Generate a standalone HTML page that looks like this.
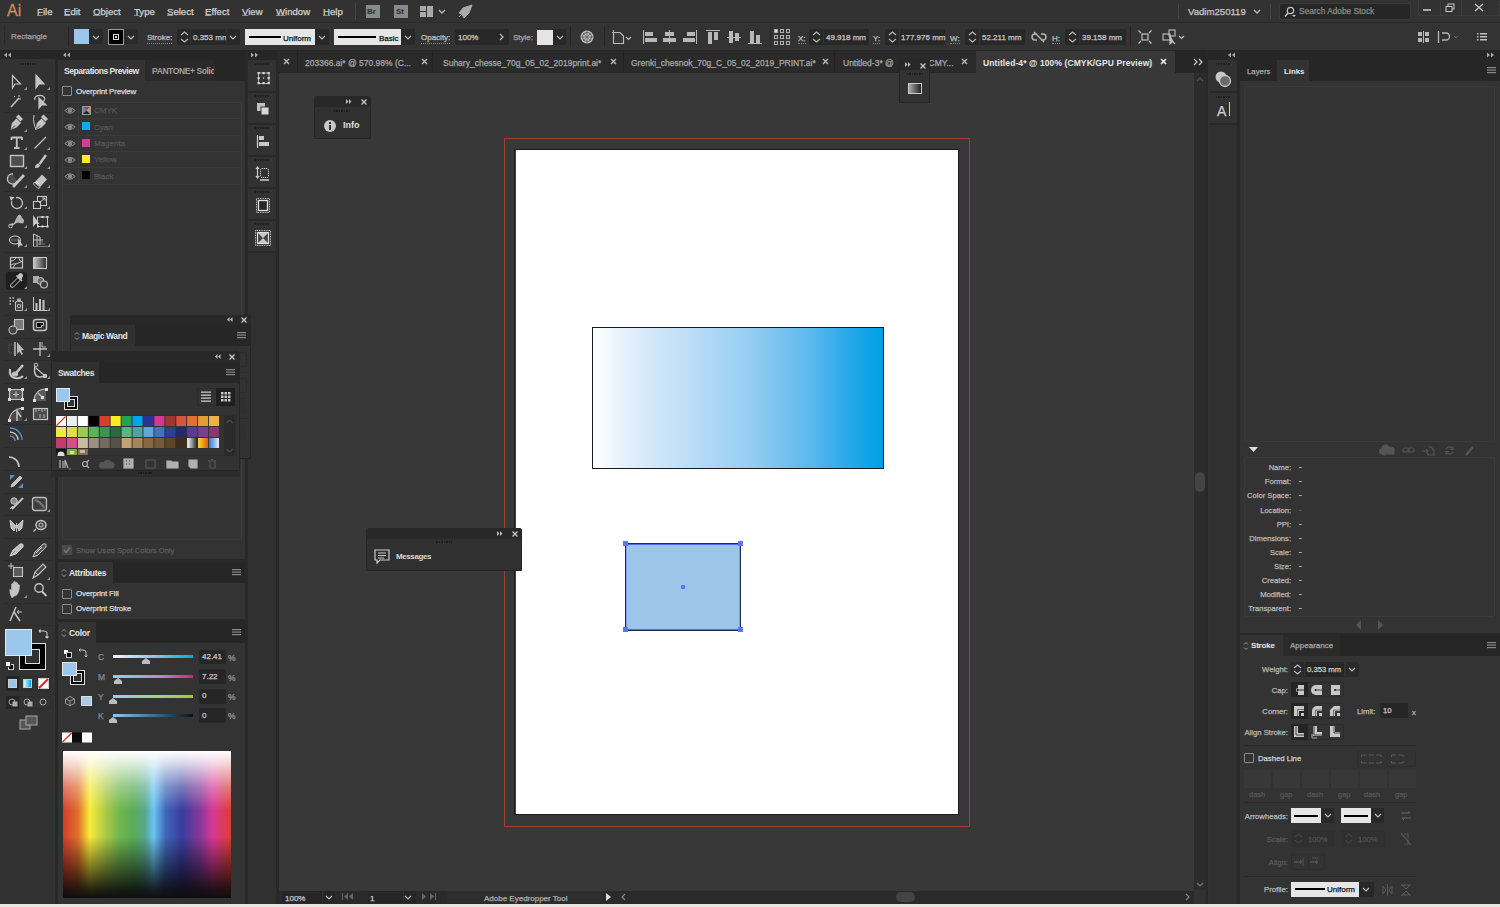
<!DOCTYPE html>
<html><head><meta charset="utf-8">
<style>
*{margin:0;padding:0;box-sizing:border-box}
html,body{width:1500px;height:907px;overflow:hidden;background:#323232;font-family:"Liberation Sans",sans-serif;color:#c8c8c8}
.a{position:absolute}
.t{position:absolute;white-space:nowrap;line-height:1;-webkit-text-stroke:0.25px currentColor}
svg{position:absolute;overflow:visible}
.t[style*="bold"]{-webkit-text-stroke:0}
#right .t{margin-top:1px}
#ctrl .t{margin-top:1px}
#tabs .t{margin-top:1px}
</style></head><body>
<!-- MENU BAR -->
<div class="a" style="left:0;top:0;width:1500px;height:22px;background:#323232"></div>
<div class="a" style="left:0;top:22px;width:1500px;height:1px;background:#2a2a2a"></div>
<!-- CONTROL BAR -->
<div class="a" style="left:0;top:23px;width:1500px;height:27px;background:#333333"></div>
<!-- MENU CONTENT -->
<div class="t" style="left:7px;top:3px;font-size:16px;color:#c98b5f;letter-spacing:0px;-webkit-text-stroke:0.3px #c98b5f">Ai</div>
<div id="menu" style="font-size:9.6px;color:#d2d2d2">
<div class="t" style="left:37px;top:7px"><span style="text-decoration:underline;text-decoration-color:#888;text-underline-offset:0px">F</span>ile</div>
<div class="t" style="left:64px;top:7px"><span style="text-decoration:underline;text-decoration-color:#888;text-underline-offset:0px">E</span>dit</div>
<div class="t" style="left:93px;top:7px"><span style="text-decoration:underline;text-decoration-color:#888;text-underline-offset:0px">O</span>bject</div>
<div class="t" style="left:134px;top:7px"><span style="text-decoration:underline;text-decoration-color:#888;text-underline-offset:0px">T</span>ype</div>
<div class="t" style="left:167px;top:7px"><span style="text-decoration:underline;text-decoration-color:#888;text-underline-offset:0px">S</span>elect</div>
<div class="t" style="left:205px;top:7px"><span style="text-decoration:underline;text-decoration-color:#888;text-underline-offset:0px">E</span>ffect</div>
<div class="t" style="left:242px;top:7px"><span style="text-decoration:underline;text-decoration-color:#888;text-underline-offset:0px">V</span>iew</div>
<div class="t" style="left:276px;top:7px"><span style="text-decoration:underline;text-decoration-color:#888;text-underline-offset:0px">W</span>indow</div>
<div class="t" style="left:323px;top:7px"><span style="text-decoration:underline;text-decoration-color:#888;text-underline-offset:0px">H</span>elp</div>
</div>
<div class="a" style="left:355px;top:3px;width:1px;height:17px;background:#454545"></div>
<div class="a" style="left:366px;top:5px;width:14px;height:13px;background:#8a8a8a"></div>
<div class="t" style="left:367px;top:8px;font-size:8px;font-weight:bold;color:#2c2c2c">Br</div>
<div class="a" style="left:394px;top:5px;width:14px;height:13px;background:#8a8a8a"></div>
<div class="t" style="left:396px;top:8px;font-size:8px;font-weight:bold;color:#2c2c2c">St</div>
<div class="a" style="left:420px;top:6px;width:6px;height:5px;background:#aaa"></div>
<div class="a" style="left:427px;top:6px;width:6px;height:11px;background:#aaa"></div>
<div class="a" style="left:420px;top:12px;width:6px;height:5px;background:#aaa"></div>
<svg style="left:438px;top:9px" width="8" height="5"><path d="M1 1 L4 4 L7 1" stroke="#bbb" stroke-width="1.3" fill="none"/></svg>
<svg style="left:457px;top:4px" width="16" height="15"><path d="M15 1 L6 4 L2 9 L5 10 L7 14 L12 9 Z M2 13 L5 10" fill="#aaa" stroke="#aaa" stroke-width="1"/></svg>
<div class="a" style="left:1178px;top:4px;width:1px;height:15px;background:#444"></div>
<div class="t" style="left:1188px;top:7px;font-size:9.6px;color:#c8c8c8">Vadim250119</div>
<svg style="left:1253px;top:9px" width="8" height="6"><path d="M1 1 L4 4 L7 1" stroke="#bbb" stroke-width="1.3" fill="none"/></svg>
<div class="a" style="left:1270px;top:4px;width:1px;height:15px;background:#444"></div>
<div class="a" style="left:1279px;top:3px;width:132px;height:17px;background:#262626;border:1px solid #3a3a3a;border-radius:2px"></div>
<svg style="left:1283px;top:6px" width="14" height="12"><circle cx="7.5" cy="4.5" r="3.2" stroke="#c8c8c8" stroke-width="1.2" fill="none"/><path d="M5 7 L2 10.5" stroke="#c8c8c8" stroke-width="1.5"/><path d="M9 9 L13 9 L11 11Z" fill="#c8c8c8"/></svg>
<div class="t" style="left:1299px;top:7px;font-size:8.3px;color:#8a8a8a">Search Adobe Stock</div>
<div class="a" style="left:1418px;top:1px;width:82px;height:15px;border:1px solid #3c3c3c;border-top:none"></div>
<div class="a" style="left:1440px;top:1px;width:1px;height:14px;background:#3c3c3c"></div>
<div class="a" style="left:1461px;top:1px;width:1px;height:14px;background:#3c3c3c"></div>
<div class="a" style="left:1423px;top:9px;width:8px;height:2px;background:#aaa"></div>
<svg style="left:1445px;top:3px" width="11" height="10"><rect x="3" y="1" width="6" height="5" stroke="#c8c8c8" fill="none"/><rect x="1" y="3.5" width="6" height="5" stroke="#c8c8c8" fill="#323232"/></svg>
<svg style="left:1474px;top:3px" width="10" height="10"><path d="M1 1 L9 8 M9 1 L1 8" stroke="#c8c8c8" stroke-width="1.3"/></svg>

<!-- CONTROL CONTENT -->
<div id="ctrl" style="font-size:8px;color:#c0c0c0">
<div class="a" style="left:4px;top:26px;width:2px;height:19px;border-left:1px dotted #222"></div>
<div class="t" style="left:11px;top:32px;color:#a4a4a4">Rectangle</div>
<div class="a" style="left:68px;top:26px;width:1px;height:21px;background:#262626"></div>
<div class="a" style="left:74px;top:29px;width:15px;height:15px;background:#9cc7ec"></div>
<div class="a" style="left:89px;top:29px;width:14px;height:15px;background:#2a2a2a;border-radius:0 2px 2px 0"></div>
<svg style="left:92px;top:35px" width="8" height="5"><path d="M1 1 L4 4 L7 1" stroke="#bbb" stroke-width="1.2" fill="none"/></svg>
<div class="a" style="left:108px;top:29px;width:16px;height:16px;background:#000;border:1px solid #9a9a9a"></div>
<div class="a" style="left:113px;top:34px;width:6px;height:6px;border:1px solid #ddd"></div>
<div class="a" style="left:115px;top:36px;width:2px;height:2px;background:#ddd"></div>
<div class="a" style="left:124px;top:29px;width:14px;height:15px;background:#2a2a2a"></div>
<svg style="left:127px;top:35px" width="8" height="5"><path d="M1 1 L4 4 L7 1" stroke="#bbb" stroke-width="1.2" fill="none"/></svg>
<div class="t" style="left:147px;top:33px;border-bottom:1px dotted #888;padding-bottom:1px">Stroke:</div>
<div class="a" style="left:177px;top:29px;width:63px;height:16px;background:#282828;border-radius:2px"></div>
<svg style="left:180px;top:30px" width="9" height="14"><path d="M1 5 L4.5 2 L8 5 M1 9 L4.5 12 L8 9" stroke="#bbb" stroke-width="1.1" fill="none"/></svg>
<div class="a" style="left:190px;top:29px;width:1px;height:16px;background:#333"></div>
<div class="t" style="left:193px;top:33px;color:#c8c8c8">0.353 mn</div>
<div class="a" style="left:226px;top:29px;width:1px;height:16px;background:#333"></div>
<svg style="left:229px;top:35px" width="8" height="5"><path d="M1 1 L4 4 L7 1" stroke="#bbb" stroke-width="1.2" fill="none"/></svg>
<div class="a" style="left:245px;top:29px;width:70px;height:16px;background:#e6e6e6"></div>
<div class="a" style="left:249px;top:36px;width:32px;height:2px;background:#000"></div>
<div class="t" style="left:283px;top:34px;color:#111">Uniform</div>
<div class="a" style="left:315px;top:29px;width:14px;height:16px;background:#282828"></div>
<svg style="left:318px;top:35px" width="8" height="5"><path d="M1 1 L4 4 L7 1" stroke="#bbb" stroke-width="1.2" fill="none"/></svg>
<div class="a" style="left:334px;top:29px;width:67px;height:16px;background:#e6e6e6"></div>
<div class="a" style="left:338px;top:36px;width:38px;height:2px;background:#000"></div>
<div class="t" style="left:379px;top:34px;color:#111">Basic</div>
<div class="a" style="left:401px;top:29px;width:14px;height:16px;background:#282828"></div>
<svg style="left:404px;top:35px" width="8" height="5"><path d="M1 1 L4 4 L7 1" stroke="#bbb" stroke-width="1.2" fill="none"/></svg>
<div class="t" style="left:421px;top:33px;border-bottom:1px dotted #888;padding-bottom:1px">Opacity:</div>
<div class="a" style="left:455px;top:29px;width:54px;height:16px;background:#282828;border-radius:2px"></div>
<div class="t" style="left:458px;top:33px;color:#c8c8c8">100%</div>
<svg style="left:499px;top:33px" width="5" height="8"><path d="M1 1 L4 4 L1 7" stroke="#bbb" stroke-width="1.2" fill="none"/></svg>
<div class="t" style="left:513px;top:33px;color:#a8a8a8">Style:</div>
<div class="a" style="left:537px;top:30px;width:16px;height:15px;background:#e4e4e4"></div>
<div class="a" style="left:553px;top:29px;width:13px;height:16px;background:#282828"></div>
<svg style="left:556px;top:35px" width="8" height="5"><path d="M1 1 L4 4 L7 1" stroke="#bbb" stroke-width="1.2" fill="none"/></svg>
<div class="a" style="left:570px;top:26px;width:1px;height:21px;background:#262626"></div>
<svg style="left:579px;top:29px" width="16" height="16"><circle cx="8" cy="8" r="6.5" fill="#c0c0c0"/><circle cx="8" cy="8" r="4.5" fill="none" stroke="#555" stroke-width="1"/><path d="M8 2 V14 M2 8 H14 M4 4 L12 12 M12 4 L4 12" stroke="#666" stroke-width="0.8"/></svg>
<div class="a" style="left:604px;top:26px;width:1px;height:21px;background:#262626"></div>
<svg style="left:610px;top:29px" width="22" height="16"><path d="M3.5 3.5 H10 L13.5 7 V14.5 H3.5 Z" fill="#3a3a3a" stroke="#bdbdbd" stroke-width="1.1"/><path d="M2 3.5 H6 M3.5 1 V5" stroke="#bbb" stroke-width="0.9"/><path d="M16 8 L18.5 10.5 L21 8" stroke="#bbb" fill="none" stroke-width="1.1"/></svg>
<svg style="left:641px;top:29px" width="125" height="16" fill="#b8b8b8">
<rect x="2" y="1" width="1" height="14"/><rect x="4" y="3" width="8" height="4"/><rect x="4" y="9" width="12" height="4"/>
<rect x="28" y="1" width="1" height="14"/><rect x="24" y="3" width="9" height="4"/><rect x="22" y="9" width="13" height="4"/>
<rect x="55" y="1" width="1" height="14"/><rect x="46" y="3" width="8" height="4"/><rect x="42" y="9" width="12" height="4"/>
<rect x="65" y="1" width="14" height="1"/><rect x="67" y="3" width="4" height="12"/><rect x="73" y="3" width="4" height="8"/>
<rect x="86" y="8" width="14" height="1"/><rect x="88" y="2" width="4" height="12"/><rect x="94" y="4" width="4" height="8"/>
<rect x="107" y="14" width="14" height="1"/><rect x="109" y="2" width="4" height="12"/><rect x="115" y="6" width="4" height="8"/>
</svg>
<div class="a" style="left:770px;top:26px;width:1px;height:21px;background:#262626"></div>
<svg style="left:774px;top:29px" width="16" height="16" fill="none" stroke="#b0b0b0" stroke-width="1"><rect x="0.5" y="0.5" width="3" height="3" fill="#ddd"/><rect x="6.5" y="0.5" width="3" height="3"/><rect x="12.5" y="0.5" width="3" height="3"/><rect x="0.5" y="6.5" width="3" height="3"/><rect x="6.5" y="6.5" width="3" height="3"/><rect x="12.5" y="6.5" width="3" height="3"/><rect x="0.5" y="12.5" width="3" height="3"/><rect x="6.5" y="12.5" width="3" height="3"/><rect x="12.5" y="12.5" width="3" height="3"/></svg>
<div class="t" style="left:798px;top:34px;border-bottom:1px dotted #888">X:</div>
<div class="a" style="left:809px;top:29px;width:60px;height:16px;background:#282828;border-radius:2px"></div>
<svg style="left:812px;top:30px" width="9" height="14"><path d="M1 5 L4.5 2 L8 5 M1 9 L4.5 12 L8 9" stroke="#bbb" stroke-width="1.1" fill="none"/></svg>
<div class="a" style="left:823px;top:29px;width:1px;height:16px;background:#333"></div>
<div class="t" style="left:826px;top:33px;color:#c8c8c8">49.918 mm</div>
<div class="t" style="left:873px;top:34px;border-bottom:1px dotted #888">Y:</div>
<div class="a" style="left:885px;top:29px;width:60px;height:16px;background:#282828;border-radius:2px"></div>
<svg style="left:888px;top:30px" width="9" height="14"><path d="M1 5 L4.5 2 L8 5 M1 9 L4.5 12 L8 9" stroke="#bbb" stroke-width="1.1" fill="none"/></svg>
<div class="a" style="left:899px;top:29px;width:1px;height:16px;background:#333"></div>
<div class="t" style="left:901px;top:33px;color:#c8c8c8">177.976 mm</div>
<div class="t" style="left:950px;top:34px;border-bottom:1px dotted #888">W:</div>
<div class="a" style="left:965px;top:29px;width:60px;height:16px;background:#282828;border-radius:2px"></div>
<svg style="left:968px;top:30px" width="9" height="14"><path d="M1 5 L4.5 2 L8 5 M1 9 L4.5 12 L8 9" stroke="#bbb" stroke-width="1.1" fill="none"/></svg>
<div class="a" style="left:979px;top:29px;width:1px;height:16px;background:#333"></div>
<div class="t" style="left:982px;top:33px;color:#c8c8c8">52.211 mm</div>
<svg style="left:1032px;top:31px" width="14" height="12" fill="none" stroke="#b8b8b8" stroke-width="1.4"><path d="M5 3 H3 A3 3 0 0 0 3 9 H5 M9 3 H11 A3 3 0 0 1 11 9 H9 M2 1 L12 11"/></svg>
<div class="t" style="left:1052px;top:34px;border-bottom:1px dotted #888">H:</div>
<div class="a" style="left:1065px;top:29px;width:61px;height:16px;background:#282828;border-radius:2px"></div>
<svg style="left:1068px;top:30px" width="9" height="14"><path d="M1 5 L4.5 2 L8 5 M1 9 L4.5 12 L8 9" stroke="#bbb" stroke-width="1.1" fill="none"/></svg>
<div class="a" style="left:1079px;top:29px;width:1px;height:16px;background:#333"></div>
<div class="t" style="left:1082px;top:33px;color:#c8c8c8">39.158 mm</div>
<div class="a" style="left:1130px;top:26px;width:1px;height:21px;background:#262626"></div>
<svg style="left:1138px;top:30px" width="14" height="14" fill="none" stroke="#c0c0c0" stroke-width="1.2"><rect x="4" y="4" width="6" height="6"/><path d="M0.5 0.5 L3 3 M13.5 0.5 L11 3 M0.5 13.5 L3 11 M13.5 13.5 L11 11"/></svg>
<svg style="left:1162px;top:29px" width="24" height="16" fill="none" stroke="#c0c0c0" stroke-width="1.1"><rect x="1" y="5" width="7" height="6"/><rect x="7" y="1" width="6" height="6"/><path d="M8 6 L8 15 L10.5 12.5 L13 15" fill="#c0c0c0"/><path d="M17 7 L19.5 9.5 L22 7" stroke-width="1.2"/></svg>
<svg style="left:1418px;top:31px" width="12" height="12" fill="#b8b8b8"><rect x="0" y="1" width="4" height="4"/><rect x="7" y="1" width="4" height="4"/><rect x="0" y="7" width="4" height="4"/><rect x="7" y="7" width="4" height="4"/><rect x="5" y="0" width="1" height="12"/></svg>
<svg style="left:1437px;top:30px" width="24" height="14" fill="none" stroke="#b8b8b8" stroke-width="1.3"><path d="M1.5 1 V13 M5 3 H9 A3 3 0 0 1 9 10 H5"/><path d="M17 6 L19 8 L21 6" stroke="#666" stroke-width="1"/></svg>
<svg style="left:1477px;top:33px" width="10" height="8" fill="#c0c0c0"><rect x="0" y="0" width="1.5" height="1.5"/><rect x="3" y="0" width="7" height="1.5"/><rect x="0" y="3" width="1.5" height="1.5"/><rect x="3" y="3" width="7" height="1.5"/><rect x="0" y="6" width="1.5" height="1.5"/><rect x="3" y="6" width="7" height="1.5"/></svg>
</div>

<!-- STRIPS -->
<div class="a" style="left:0;top:50px;width:1500px;height:10px;background:#262626"></div>

<!-- TOOLS -->
<div class="a" style="left:1px;top:59px;width:54px;height:848px;background:#323232"></div>
<div class="a" style="left:55px;top:59px;width:3px;height:848px;background:#282828"></div>

<!-- TOOL ICONS -->
<div id="tools">
<svg style="left:1px;top:50px" width="56" height="10"><path d="M3 5 L6 2.5 L6 7.5Z M7 5 L10 2.5 L10 7.5Z" fill="#aaa"/></svg>
<div class="a" style="left:20px;top:63px;width:16px;height:2px;background:repeating-linear-gradient(to right,#1e1e1e 0 1.5px,transparent 1.5px 2.5px)"></div>
<!-- separators -->
<div class="a" style="left:5px;top:112px;width:46px;height:1px;background:#2a2a2a"></div>
<div class="a" style="left:5px;top:191px;width:46px;height:1px;background:#2a2a2a"></div>
<div class="a" style="left:5px;top:252px;width:46px;height:1px;background:#2a2a2a"></div>
<div class="a" style="left:5px;top:292px;width:46px;height:1px;background:#2a2a2a"></div>
<div class="a" style="left:5px;top:315px;width:46px;height:1px;background:#2a2a2a"></div>
<div class="a" style="left:5px;top:338px;width:46px;height:1px;background:#2a2a2a"></div>
<div class="a" style="left:5px;top:360px;width:46px;height:1px;background:#2a2a2a"></div>
<div class="a" style="left:5px;top:383px;width:46px;height:1px;background:#2a2a2a"></div>
<div class="a" style="left:5px;top:424px;width:46px;height:1px;background:#2a2a2a"></div>
<div class="a" style="left:5px;top:447px;width:46px;height:1px;background:#2a2a2a"></div>
<div class="a" style="left:5px;top:470px;width:46px;height:1px;background:#2a2a2a"></div>
<div class="a" style="left:5px;top:493px;width:46px;height:1px;background:#2a2a2a"></div>
<div class="a" style="left:5px;top:515px;width:46px;height:1px;background:#2a2a2a"></div>
<div class="a" style="left:5px;top:538px;width:46px;height:1px;background:#2a2a2a"></div>
<div class="a" style="left:5px;top:560px;width:46px;height:1px;background:#2a2a2a"></div>
<div class="a" style="left:5px;top:603px;width:46px;height:1px;background:#2a2a2a"></div>
<div class="a" style="left:5px;top:625px;width:46px;height:1px;background:#2a2a2a"></div>
<div class="a" style="left:6px;top:272px;width:21px;height:18px;background:#1f1f1f;border-radius:2px"></div>
<svg style="left:0;top:60px" width="56" height="580" fill="none" stroke="#c4c4c4" stroke-width="1.2">
<!-- row 82 -->
<path d="M12.5 15.5 V28 L15 24 L20.5 24 Z"/>
<path d="M36 15 V28 L39 24 L44 24 Z" fill="#c4c4c4"/>
<!-- row 101 -->
<path d="M11 47 L19 38" stroke-width="1.6"/><path d="M14 36 l1 1 M19 35 l0 2 M21 39 l-2 0" stroke-width="1"/>
<path d="M35 40 a5 3.5 0 1 1 7 2" /><path d="M39 38 V48 L41.5 45 L46 45 Z" fill="#c4c4c4"/>
<!-- row 123 -->
<path d="M10.5 70 L12 63 L16.5 58.5 L21 63 L16.5 67.5 Z" fill="#c4c4c4" stroke="none"/><path d="M16 57 L18.5 54.5 L23 59 L20.5 61.5Z" fill="#c4c4c4" stroke="none"/><path d="M11 69.5 L15 65.5" stroke="#323232" stroke-width="0.9"/>
<path d="M34 55 q-1 5 0 8 q1 4 2 7" stroke-width="1"/><path d="M35.5 70 L37 63 L41.5 58.5 L46 63 L41.5 67.5 Z" fill="#c4c4c4" stroke="none"/><path d="M41 57 L43.5 54.5 L48 59 L45.5 61.5Z" fill="#c4c4c4" stroke="none"/><path d="M36 69.5 L40 65.5" stroke="#323232" stroke-width="0.9"/>
<!-- row 142 -->
<path d="M11.5 77.5 H22 M11.5 77 V80 M22 77 V80 M16.75 77.5 V88 M14 88 H19.5" stroke-width="1.8"/>
<path d="M34.5 88.5 L46 77" stroke-width="1.3"/>
<!-- row 161 -->
<rect x="10.5" y="95.5" width="13" height="11" fill="#4e4e4e" stroke-width="1.4"/>
<path d="M35 108 q0 -4 3.5 -4.5 l1.5 1.5 q-0.5 3.5 -5 3Z" fill="#c4c4c4" stroke="none"/><path d="M39.5 104 L46 95" stroke-width="2.4"/>
<!-- row 180 -->
<path d="M17 121 A5 5 0 1 1 13 114" stroke-width="1.3" fill="#4a4a4a"/><path d="M13 127 L24 115" stroke-width="2.6"/>
<path d="M35 122 L42 114.5 L47 119.5 L40 127 Z" fill="#c4c4c4" stroke="none"/><path d="M35 122 L38 125 M36 121 L39 124" stroke="#fff" stroke-width="0.8"/><path d="M34.5 122 l5.5 5.5 l-2 1 l-4.5 -4.5Z" fill="none" stroke="#ddd" stroke-width="0.8"/>
<!-- row 202 -->
<circle cx="17" cy="143" r="5.5" stroke-dasharray="28 7" transform="rotate(-100 17 143)" stroke-width="1.3"/><path d="M9.5 136.5 L14.5 137 L11 141Z" fill="#c4c4c4" stroke="none"/>
<rect x="37.5" y="136.5" width="9" height="9" stroke-width="1.1"/><rect x="33.5" y="141.5" width="7" height="7" fill="#323232" stroke-width="1.1"/><path d="M39 143 L45 138 M42 138 H45 V141" stroke-width="1"/>
<!-- row 221 -->
<path d="M10 165 q2 -2 4 -1 q3 -6 4 -8 q1 -2 3 0 q0 3 2 3 q1 2 0 4 q-3 0 -5 -1 q-3 1 -5 3 Z" fill="#b0b0b0" stroke-width="0.8"/><circle cx="10.5" cy="166" r="1.8" stroke-width="0.9"/>
<rect x="37.5" y="157" width="10" height="9.5" stroke-width="1"/><path d="M33 155 V167 L35.5 164 L39.5 164 Z" fill="#c4c4c4" stroke="none"/><g fill="#ddd" stroke="none"><rect x="46.5" y="156" width="2" height="2"/><rect x="46.5" y="165.5" width="2" height="2"/><rect x="37" y="165.5" width="2" height="2"/><rect x="41.5" y="165.5" width="2" height="2"/><rect x="41.5" y="156" width="2" height="2"/></g>
<!-- row 240 -->
<ellipse cx="15" cy="180" rx="5.5" ry="4" stroke-width="1.1"/><path d="M11 180 h7" stroke="#777" stroke-width="1"/><path d="M18 178 V188 L20 185.5 L23 185.5 Z" fill="#c4c4c4" stroke="none"/>
<path d="M33.5 174 V186.5 M33.5 174 L40 177 V185 M37 175.5 V186" stroke-width="1"/><path d="M33.5 180 H40 M40 180 H43" stroke-width="1"/><path d="M33 186.5 H47 M38 184 H45 M40 182 H43" stroke="#888" stroke-width="0.9"/>
<!-- row 262 -->
<defs><linearGradient id="tg1"><stop offset="0" stop-color="#c8c8c8"/><stop offset="1" stop-color="#2a2a2a"/></linearGradient></defs>
<rect x="10.5" y="197.5" width="12" height="10.5" stroke-width="1.2"/><path d="M11 201 q3 0 5 -3 M13 208 q1 -4 5 -5 q2 0 4 -2 M16 204 q-2 -1 -5 1 M19 198 q0 3 3 4" stroke-width="1"/>
<rect x="33.5" y="197.5" width="13" height="11" fill="url(#tg1)" stroke="#c8c8c8" stroke-width="1.1"/>
<!-- row 281 eyedropper -->
<path d="M11 227 L10.5 225 L18 217.5 L20.5 220 L13 227.5 Z" stroke-width="1"/><path d="M17 216 L20 213 Q23 213 23 216 L21.5 219.5Z" fill="#c4c4c4" stroke="none"/><path d="M16.5 215.5 L22 221" stroke-width="1.6"/>
<rect x="33" y="216" width="6" height="7" fill="#aaa" stroke="none"/><circle cx="40.5" cy="221" r="3.5" fill="#666" stroke-width="1"/><circle cx="44" cy="224.5" r="3.5" fill="#3a3a3a" stroke-width="1.1"/>
<!-- row 304 -->
<path d="M9.5 238 h1.5 M12.5 238 h1.5 M9.5 241 h1.5 M12.5 241 h1.5 M9.5 244 h1.5" stroke-width="1.4"/><rect x="15.5" y="241.5" width="7" height="9" rx="1" fill="#3a3a3a" stroke-width="1.1"/><rect x="17" y="238.5" width="4" height="3" fill="#aaa" stroke="none"/><circle cx="19" cy="246" r="1.8" stroke-width="1"/>
<path d="M33.5 237 V250.5 H47.5" stroke-width="1"/><path d="M36.5 250 V243 M40 250 V239 M43.5 250 V240" stroke-width="2"/>
<!-- row 326 -->
<rect x="14.5" y="259.5" width="9" height="10" fill="#777" stroke-width="1.1"/><circle cx="13" cy="270" r="4" fill="#444" stroke-width="1.1"/>
<rect x="33.5" y="259.5" width="13" height="11" rx="2.5" stroke-width="1.5"/><path d="M36.5 262.5 h7 v3 h-2 v2 h-5Z" fill="#000" stroke="#ddd" stroke-width="0.8"/>
<!-- row 349 -->
<rect x="9" y="284" width="5" height="9" stroke="#5a5a5a" stroke-width="1" stroke-dasharray="1 1"/><path d="M15 282 V296" stroke-width="1.4"/><path d="M17 282 V294 L19.5 291.5 L21.5 295 L23 294 L21 290.5 L24 290 Z" fill="#b8b8b8" stroke="none"/>
<path d="M33 289 H47 M40 282 V296" stroke-width="1.3"/><path d="M42 282 V287 H46" stroke-width="0.9"/>
<!-- row 372 -->
<path d="M10 309 q-1 8 5 9 q5 1 8 -2" stroke-width="2.2"/><path d="M16 313 L23 305" stroke-width="2.6"/><ellipse cx="15" cy="314" rx="2.5" ry="2" fill="#c4c4c4"/>
<path d="M35 306 q-2 11 5 11 q4 0 6 -2" stroke-width="1.5"/><path d="M36 308 L45 316" stroke-width="1.1"/><circle cx="36" cy="305" r="1.8" stroke-width="1"/><circle cx="45" cy="316" r="1.6" fill="#c4c4c4"/>
<!-- row 394 -->
<rect x="9.5" y="329.5" width="13" height="10" rx="2" fill="#5a5a5a"/><path d="M13 334.5 h6 M16 331.5 v6" stroke-width="1"/>
<g fill="#ddd" stroke="none"><rect x="8" y="328" width="3" height="3"/><rect x="21" y="328" width="3" height="3"/><rect x="8" y="338" width="3" height="3"/><rect x="21" y="338" width="3" height="3"/></g>
<path d="M34 341 Q35 329 46 329 V341 Z" fill="#5a5a5a" stroke="none"/><path d="M34 341 Q35 329 46 329" stroke-width="1.1"/><path d="M38 333 L42 337" stroke-width="1.3"/>
<g fill="#ddd" stroke="none"><rect x="33" y="339" width="3" height="3"/><rect x="45" y="328" width="3" height="3"/><rect x="41" y="336" width="3" height="3"/></g>
<!-- row 414 -->
<path d="M9 361 Q10 350 22 348 V361 Z" fill="#4a4a4a" stroke="none"/><path d="M9 361 Q10 350 22 348" stroke-width="1.1"/><path d="M17 361 V351 L21 357" stroke-width="1.5"/>
<g fill="#ddd" stroke="none"><rect x="8" y="359" width="3" height="3"/><rect x="21" y="347" width="3" height="3"/></g>
<rect x="33.5" y="348.5" width="14" height="11" fill="#4a4a4a" stroke-width="1.2"/><path d="M36 349 v3 M39 349 v2 M42 349 v3 M45 349 v2 M40 354 v4 M44 354 v4" stroke-width="0.9"/>
<!-- row 436 arcs -->
<path d="M10 368 a12 12 0 0 1 12 12" stroke="#5b8ec4" stroke-width="1.4"/><path d="M10 372 a8 8 0 0 1 8 8" stroke-width="1.4"/><path d="M10 376 a5 5 0 0 1 5 5" stroke="#5b8ec4" stroke-width="1.4"/>
<!-- row 461 -->
<path d="M9 397 a10 10 0 0 1 10 10" stroke-width="1.6"/>
<!-- row 481 pencil -->
<path d="M10 415 h5 l-5 5Z M23 428 h-5 l5 -5Z" fill="#5b8ec4" stroke="none"/><path d="M11 427 L12 424 L20 416 L22 418 L14 426 Z" fill="#c4c4c4" stroke-width="1"/>
<!-- row 504 -->
<circle cx="14" cy="441" r="3.2" fill="#888" stroke-width="1"/><path d="M12 449 L23 438" stroke-width="2"/><path d="M10 449 q2 -4 5 -2" fill="#c4c4c4" stroke-width="1"/>
<rect x="32.5" y="437.5" width="14" height="13" rx="2.5" fill="#3e3e3e" stroke="#bdbdbd" stroke-width="1.3"/><path d="M35 440 q6 2 9 8" stroke="#777" stroke-width="2"/>
<!-- row 526 -->
<path d="M16 466 L10 460 L11 468 L14 471 Z M17 466 L23 460 L22 468 L19 471 Z" fill="#b8b8b8" stroke="#ddd" stroke-width="0.8"/><path d="M16.5 463 v9" stroke-width="1"/>
<ellipse cx="41" cy="465" rx="5" ry="4.5" fill="#444" stroke-width="1.5"/><circle cx="41" cy="465" r="2" stroke-width="1"/><path d="M36 469 l-2.5 2.5" stroke-width="1.3"/>
<!-- row 549 -->
<path d="M10 496 L13 490 L20 484 Q24 483 23 487 L16 494 Z" fill="#c0c0c0" stroke="#e0e0e0" stroke-width="0.8"/><path d="M12 494 l3 -3" stroke="#777" stroke-width="0.8"/>
<path d="M33 497 L35 492 L43 484 Q47 483 46 487 L38 495 Z" fill="#555" stroke="#d0d0d0" stroke-width="1"/><path d="M36 493 l6 -6" stroke="#ddd" stroke-width="1"/>
<!-- row 572 -->
<path d="M8 506 h6 M11 503 v6" stroke-width="1"/><rect x="13.5" y="507.5" width="9" height="9" fill="#5a5a5a" stroke-width="1.1"/>
<path d="M33 518 L35 512 L43 504 L46 507 L38 515 Z" fill="#444" stroke-width="1.1"/><path d="M35 512 L38 515" stroke-width="1"/>
<!-- row 591 hand / zoom -->
<path d="M12 538 q-3 -5 -2 -9 l1.5 2 v-7 q1 -1.5 2 0 v5 v-7 q1 -1.5 2 0 v7 v-6 q1 -1.5 2 0 v6 v-4 q1 -1.5 2 0 q0 6 -2 9 q-1 2 -3 2 Z" fill="#c4c4c4" stroke-width="0.5"/>
<circle cx="39" cy="528" r="4.2" stroke-width="1.4"/><path d="M42 531.5 L46.5 536" stroke-width="2"/>
<!-- row 613 -->
<path d="M10 561 L16 547 M14 552 L20 561" stroke-width="1.5"/><path d="M17 552 h5 M19 550 l-2 2 l2 2" stroke-width="1"/>
<!-- small corner triangles -->
<path d="M24 30 l3 -3 v3Z M47 30 l3 -3 v3Z M24 72 l3 -3 v3Z M24 90 l3 -3 v3Z M47 90 l3 -3 v3Z M24 109 l3 -3 v3Z M47 109 l3 -3 v3Z M24 128 l3 -3 v3Z M47 128 l3 -3 v3Z M24 149 l3 -3 v3Z M47 149 l3 -3 v3Z M24 168 l3 -3 v3Z M24 187 l3 -3 v3Z M47 187 l3 -3 v3Z M24 229 l3 -3 v3Z M24 251 l3 -3 v3Z M47 251 l3 -3 v3Z M47 297 l3 -3 v3Z M24 319 l3 -3 v3Z M47 319 l3 -3 v3Z M24 361 l3 -3 v3Z M47 452 l3 -3 v3Z M47 520 l3 -3 v3Z M24 538 l3 -3 v3Z" fill="#9a9a9a" stroke="none"/>
</svg>
<!-- fill/stroke -->
<svg style="left:38px;top:629px" width="11" height="10" fill="none" stroke="#c4c4c4" stroke-width="1.1"><path d="M1 2 h4 M1 2 l1.5 -1.5 M1 2 l1.5 1.5 M9 4 v5 M9 9 l-1.5 -1.5 M9 9 l1.5 -1.5 M5 2 q4 0 4 2"/></svg>
<div class="a" style="left:19px;top:643px;width:27px;height:27px;background:#000;border:1px solid #ddd"></div>
<div class="a" style="left:25px;top:649px;width:15px;height:15px;background:#2e3434;border:1px solid #ddd"></div>
<div class="a" style="left:5px;top:629px;width:27px;height:27px;background:#9cc7ec;border:1px solid #e8e8e8"></div>
<div class="a" style="left:8px;top:664px;width:6px;height:6px;background:#000;border:1px solid #ccc"></div>
<div class="a" style="left:5px;top:661px;width:6px;height:6px;background:#fff;border:1px solid #333"></div>
<div class="a" style="left:6px;top:676px;width:45px;height:15px;border:1px solid #2c2c2c;border-radius:2px"></div>
<div class="a" style="left:6px;top:676px;width:13px;height:15px;background:#242424"></div>
<div class="a" style="left:8px;top:679px;width:9px;height:9px;background:#9cc7ec;border:1px solid #ccc"></div>
<div class="a" style="left:23px;top:679px;width:9px;height:9px;background:linear-gradient(to right,#e8f4ff,#00a8ee);border:1px solid #ccc"></div>
<svg style="left:38px;top:678px" width="11" height="11"><rect x="0.5" y="0.5" width="10" height="10" fill="#fff" stroke="#ccc"/><path d="M1 10 L10 1" stroke="#e02020" stroke-width="2"/></svg>
<div class="a" style="left:6px;top:696px;width:45px;height:13px;border:1px solid #2c2c2c;border-radius:2px"></div>
<div class="a" style="left:6px;top:696px;width:13px;height:13px;background:#242424"></div>
<svg style="left:7px;top:697px" width="44" height="11" fill="none" stroke="#aaa" stroke-width="1"><circle cx="5" cy="5" r="3"/><rect x="6" y="5" width="4" height="4" fill="#aaa"/><circle cx="20" cy="5" r="3"/><rect x="21" y="5" width="4" height="4" fill="#aaa"/><circle cx="36" cy="5" r="3"/></svg>
<svg style="left:19px;top:715px" width="19" height="15" fill="#555" stroke="#aaa" stroke-width="1"><rect x="1" y="5" width="10" height="9"/><rect x="7" y="1" width="11" height="9"/></svg>
</div>

<!-- LEFT PANEL COLUMN -->
<div id="leftcol" class="a" style="left:58px;top:60px;width:187px;height:848px;background:#333333"></div>
<div class="a" style="left:245px;top:50px;width:3px;height:857px;background:#282828"></div>
<!-- Left column content -->
<div id="leftpanels" style="font-size:8.5px">
<svg style="left:60px;top:50px" width="200" height="10"><path d="M3 5 L6 2.5 L6 7.5Z M7 5 L10 2.5 L10 7.5Z" fill="#aaa"/><path d="M191 2.5 L194 5 L191 7.5Z M195 2.5 L198 5 L195 7.5Z" fill="#aaa"/></svg>
<!-- Separations tab bar -->
<div class="a" style="left:58px;top:60px;width:187px;height:21px;background:#262626"></div>
<div class="a" style="left:58px;top:60px;width:87px;height:21px;background:#333333"></div>
<div class="a" style="left:145px;top:60px;width:70px;height:21px;background:#2a2a2a"></div>
<div class="t" style="left:64px;top:67px;font-weight:bold;color:#e4e4e4;letter-spacing:-0.45px">Separations Preview</div>
<div class="a" style="left:152px;top:60px;width:62px;height:21px;overflow:hidden"><div class="t" style="left:0;top:7px;font-weight:bold;color:#a0a0a0;letter-spacing:-0.4px">PANTONE+ Solid</div></div>
<div class="a" style="left:62px;top:86px;width:10px;height:10px;border:1px solid #8a8a8a;border-radius:1px"></div>
<div class="t" style="left:76px;top:88px;font-size:8px;color:#d8d8d8;letter-spacing:-0.2px">Overprint Preview</div>
<div class="a" style="left:62px;top:102px;width:180px;height:438px;border:1px solid #3b3b3b;border-radius:2px"></div>
<div class="a" style="left:63px;top:118px;width:178px;height:1px;background:#3b3b3b"></div>
<div class="a" style="left:63px;top:135px;width:178px;height:1px;background:#3b3b3b"></div>
<div class="a" style="left:63px;top:151px;width:178px;height:1px;background:#3b3b3b"></div>
<div class="a" style="left:63px;top:167px;width:178px;height:1px;background:#3b3b3b"></div>
<div class="a" style="left:63px;top:184px;width:178px;height:1px;background:#3b3b3b"></div>
<div class="a" style="left:78px;top:103px;width:1px;height:81px;background:#3b3b3b"></div>
<svg style="left:64px;top:105px" width="12" height="80" fill="none" stroke="#8a8a8a" stroke-width="1.1">
<path d="M1 5.5 Q6 0 11 5.5 Q6 11 1 5.5Z"/><circle cx="6" cy="5.5" r="1.8" fill="#8a8a8a"/>
<path d="M1 22 Q6 16.5 11 22 Q6 27.5 1 22Z"/><circle cx="6" cy="22" r="1.8" fill="#8a8a8a"/>
<path d="M1 38.5 Q6 33 11 38.5 Q6 44 1 38.5Z"/><circle cx="6" cy="38.5" r="1.8" fill="#8a8a8a"/>
<path d="M1 55 Q6 49.5 11 55 Q6 60.5 1 55Z"/><circle cx="6" cy="55" r="1.8" fill="#8a8a8a"/>
<path d="M1 71.5 Q6 66 11 71.5 Q6 77 1 71.5Z"/><circle cx="6" cy="71.5" r="1.8" fill="#8a8a8a"/>
</svg>
<svg style="left:82px;top:106px" width="9" height="9"><rect width="9" height="9" fill="#999"/><path d="M1 1 L8 1 L4.5 4.5Z" fill="#b02fb0"/><path d="M1 1 L1 8 L4.5 4.5Z" fill="#2aa0a0"/><path d="M8 1 L8 8 L4.5 4.5Z" fill="#b0b020"/><path d="M1 8 L8 8 L4.5 4.5Z" fill="#222"/></svg>
<div class="a" style="left:82px;top:122px;width:8px;height:8px;background:#00aeef"></div>
<div class="a" style="left:82px;top:139px;width:8px;height:8px;background:#d83a96"></div>
<div class="a" style="left:82px;top:155px;width:8px;height:8px;background:#fdea22"></div>
<div class="a" style="left:82px;top:171px;width:8px;height:8px;background:#000"></div>
<div style="color:#555555;font-size:8px">
<div class="t" style="left:94px;top:107px">CMYK</div>
<div class="t" style="left:94px;top:124px">Cyan</div>
<div class="t" style="left:94px;top:140px">Magenta</div>
<div class="t" style="left:94px;top:156px">Yellow</div>
<div class="t" style="left:94px;top:173px">Black</div>
</div>
<div class="a" style="left:62px;top:545px;width:10px;height:10px;background:#4a4a4a;border-radius:1px"></div>
<svg style="left:63px;top:546px" width="8" height="8"><path d="M1 4 L3 6.5 L7 1.5" stroke="#777" stroke-width="1.3" fill="none"/></svg>
<div class="t" style="left:76px;top:547px;font-size:7.6px;color:#5c5c5c">Show Used Spot Colors Only</div>
<!-- separator -->
<div class="a" style="left:58px;top:559px;width:187px;height:3px;background:#282828"></div>
<!-- Attributes -->
<div class="a" style="left:58px;top:562px;width:187px;height:21px;background:#262626"></div>
<div class="a" style="left:58px;top:562px;width:55px;height:21px;background:#333333"></div>
<svg style="left:61px;top:568px" width="6" height="10" fill="none" stroke="#999" stroke-width="1"><path d="M1 3.5 L3 1.5 L5 3.5 M1 6.5 L3 8.5 L5 6.5"/></svg>
<div class="t" style="left:69px;top:569px;font-weight:bold;color:#e4e4e4;letter-spacing:-0.3px">Attributes</div>
<svg style="left:232px;top:569px" width="9" height="7" fill="#888"><rect y="0" width="9" height="1.2"/><rect y="2.5" width="9" height="1.2"/><rect y="5" width="9" height="1.2"/></svg>
<div class="a" style="left:62px;top:589px;width:10px;height:10px;border:1px solid #8a8a8a;border-radius:1px"></div>
<div class="t" style="left:76px;top:590px;font-size:8px;color:#d8d8d8;letter-spacing:-0.2px">Overprint Fill</div>
<div class="a" style="left:62px;top:604px;width:10px;height:10px;border:1px solid #8a8a8a;border-radius:1px"></div>
<div class="t" style="left:76px;top:605px;font-size:8px;color:#d8d8d8;letter-spacing:-0.2px">Overprint Stroke</div>
<div class="a" style="left:58px;top:619px;width:187px;height:3px;background:#282828"></div>
<!-- Color -->
<div class="a" style="left:58px;top:622px;width:187px;height:21px;background:#262626"></div>
<div class="a" style="left:58px;top:622px;width:38px;height:21px;background:#333333"></div>
<svg style="left:61px;top:628px" width="6" height="10" fill="none" stroke="#999" stroke-width="1"><path d="M1 3.5 L3 1.5 L5 3.5 M1 6.5 L3 8.5 L5 6.5"/></svg>
<div class="t" style="left:69px;top:629px;font-weight:bold;color:#e4e4e4;letter-spacing:-0.3px">Color</div>
<svg style="left:232px;top:629px" width="9" height="7" fill="#888"><rect y="0" width="9" height="1.2"/><rect y="2.5" width="9" height="1.2"/><rect y="5" width="9" height="1.2"/></svg>
<div class="a" style="left:63px;top:649px;width:6px;height:6px;background:#fff;border:1px solid #333"></div>
<div class="a" style="left:66px;top:652px;width:6px;height:6px;border:1px solid #ccc;background:#000"></div>
<svg style="left:78px;top:648px" width="10" height="10" fill="none" stroke="#c4c4c4" stroke-width="1"><path d="M1 2 h4 M1 2 l1.5 -1.5 M1 2 l1.5 1.5 M8 4 v5 M8 9 l-1.5 -1.5 M8 9 l1.5 -1.5 M5 2 q3 0 3 2"/></svg>
<div class="a" style="left:70px;top:670px;width:15px;height:15px;background:#000;border:1px solid #ddd"></div>
<div class="a" style="left:73px;top:673px;width:9px;height:9px;background:#2e3434;border:1px solid #ddd"></div>
<div class="a" style="left:62px;top:662px;width:15px;height:14px;background:#9cc7ec;border:1px solid #e8e8e8"></div>
<svg style="left:65px;top:696px" width="10" height="10" fill="none" stroke="#999" stroke-width="1"><path d="M5 0.5 L9.5 3 V7.5 L5 9.5 L0.5 7.5 V3Z M0.5 3 L5 5 L9.5 3 M5 5 V9.5"/></svg>
<div class="a" style="left:81px;top:696px;width:11px;height:10px;background:#a8c9f0;border:1px solid #ddd"></div>
<div style="font-size:8.5px;color:#8a8a8a">
<div class="t" style="left:98px;top:653px">C</div>
<div class="t" style="left:98px;top:673px">M</div>
<div class="t" style="left:98px;top:693px">Y</div>
<div class="t" style="left:98px;top:712px">K</div>
</div>
<div class="a" style="left:113px;top:655px;width:80px;height:3px;background:linear-gradient(to right,#fdf0f8,#9fd2f0 40%,#00a8e4)"></div>
<div class="a" style="left:113px;top:675px;width:80px;height:3px;background:linear-gradient(to right,#88cff2,#b888d0 60%,#c02888)"></div>
<div class="a" style="left:113px;top:695px;width:80px;height:3px;background:linear-gradient(to right,#8fd0f0,#a8d080 60%,#a8c828)"></div>
<div class="a" style="left:113px;top:714px;width:80px;height:3px;background:linear-gradient(to right,#8fc8ec,#2a4a60 70%,#08141c)"></div>
<svg style="left:0;top:0" width="250" height="730" fill="#bdbdbd"><path d="M146 658 L150 661 V664 H142 V661Z"/><path d="M118 678 L122 681 V684 H114 V681Z"/><path d="M113 698 L117 701 V704 H109 V701Z"/><path d="M113 717 L117 720 V723 H109 V720Z"/></svg>
<div class="a" style="left:199px;top:650px;width:27px;height:14px;background:#262626;border-radius:2px"></div>
<div class="a" style="left:199px;top:669px;width:27px;height:15px;background:#262626;border-radius:2px"></div>
<div class="a" style="left:199px;top:689px;width:27px;height:15px;background:#262626;border-radius:2px"></div>
<div class="a" style="left:199px;top:708px;width:27px;height:15px;background:#262626;border-radius:2px"></div>
<div style="font-size:8px;color:#c8c8c8">
<div class="t" style="left:202px;top:653px">42.41</div>
<div class="t" style="left:202px;top:673px">7.22</div>
<div class="t" style="left:202px;top:692px">0</div>
<div class="t" style="left:202px;top:712px">0</div>
</div>
<div style="font-size:8.5px;color:#999">
<div class="t" style="left:228px;top:654px">%</div>
<div class="t" style="left:228px;top:674px">%</div>
<div class="t" style="left:228px;top:693px">%</div>
<div class="t" style="left:228px;top:712px">%</div>
</div>
<svg style="left:62px;top:732px" width="30" height="11"><rect x="0" y="0.5" width="10" height="10" fill="#fff"/><path d="M0.5 10 L9.5 1" stroke="#e03a1e" stroke-width="1.4"/><rect x="10" y="0.5" width="10" height="10" fill="#0c0c0c"/><rect x="20" y="0.5" width="10" height="10" fill="#fff"/></svg>
<!-- spectrum -->
<div class="a" style="left:63px;top:751px;width:168px;height:147px;background:linear-gradient(to right,#d43c2c 0%,#e0702c 9%,#f8ec38 16%,#a8c848 26%,#70b650 34%,#5aac58 42%,#58a890 49%,#6ac4f4 54%,#4068b8 61%,#3a3c9c 71%,#8a3898 82%,#d83898 89%,#d84030 100%)"></div>
<div class="a" style="left:63px;top:751px;width:168px;height:147px;background:linear-gradient(to bottom,#ffffff 0%,rgba(255,255,255,0.8) 8%,rgba(255,255,255,0.32) 24%,rgba(255,255,255,0) 40%,rgba(0,0,0,0) 58%,rgba(0,0,0,0.5) 80%,rgba(10,10,10,0.88) 94%,#0e0e0e 100%)"></div>
</div>

<!-- ICON COLUMN -->
<div class="a" style="left:248px;top:60px;width:28px;height:847px;background:#323232"></div>
<div class="a" style="left:276px;top:50px;width:3px;height:857px;background:#282828"></div>

<!-- icon column content -->
<svg style="left:248px;top:60px" width="28" height="200">
<g stroke="#1e1e1e" stroke-width="2" stroke-dasharray="1.5 1"><path d="M7 4 H22 M7 36 H22 M7 68 H22 M7 100 H22 M7 132 H22 M7 164 H22"/></g>
<g fill="#282828"><rect x="0" y="31" width="28" height="2"/><rect x="0" y="63" width="28" height="2"/><rect x="0" y="95" width="28" height="2"/><rect x="0" y="127" width="28" height="2"/><rect x="0" y="159" width="28" height="2"/><rect x="0" y="191" width="28" height="2"/></g>
<g fill="none" stroke="#d0d0d0" stroke-width="1">
<rect x="10.5" y="13" width="10.5" height="10.5" stroke="#bbb" stroke-width="0.9"/>
<g fill="#d8d8d8" stroke="none"><rect x="9.5" y="12" width="2.2" height="2.2"/><rect x="14.5" y="12" width="2.2" height="2.2"/><rect x="19.5" y="12" width="2.2" height="2.2"/><rect x="9.5" y="17" width="2.2" height="2.2"/><rect x="19.5" y="17" width="2.2" height="2.2"/><rect x="9.5" y="22" width="2.2" height="2.2"/><rect x="14.5" y="22" width="2.2" height="2.2"/><rect x="19.5" y="22" width="2.2" height="2.2"/><rect x="15" y="17.5" width="1.2" height="1.2"/></g>
<rect x="9" y="43" width="8" height="8" fill="#c0c0c0" stroke="none"/><rect x="13" y="47" width="8" height="8" fill="#d8d8d8" stroke="#333" stroke-width="1"/>
<path d="M9.5 75 V88" stroke-width="1.2"/><rect x="11" y="76" width="5" height="4" fill="#c8c8c8" stroke="none"/><rect x="11" y="82" width="10" height="4" fill="#c8c8c8" stroke="none"/>
<path d="M9.5 107 V118 M8 109 L9.5 107 L11 109 M8 116 L9.5 118 L11 116" stroke-width="1.1"/><rect x="12.5" y="108.5" width="8" height="9" rx="1.5" stroke-dasharray="1.2 0.8"/><path d="M12 120 h9" stroke-width="1.5"/>
<rect x="8.5" y="138.5" width="13" height="14" stroke-dasharray="1 0.7" stroke="#c0c0c0"/><rect x="10.5" y="140.5" width="9" height="10" fill="#262626" stroke="#e0e0e0" stroke-width="1.3"/>
<rect x="7.5" y="170.5" width="15" height="15" stroke-dasharray="1 0.7" stroke="#c0c0c0"/><rect x="9.5" y="172.5" width="11" height="11" fill="#444" stroke="#e0e0e0" stroke-width="1.2"/><path d="M10 173 L20 183 H10 L20 173 Z" fill="#c8c8c8" stroke="none"/>
</g>
</svg>
<div class="a" style="left:248px;top:253px;width:28px;height:654px;background:#303030"></div>

<!-- Magic Wand floating -->
<div class="a" style="left:70px;top:315px;width:181px;height:144px;background:#323232;border:1px solid #262626;border-radius:3px 3px 0 0"></div>
<div class="a" style="left:70px;top:315px;width:181px;height:10px;background:#282828;border-radius:3px 3px 0 0"></div>
<div class="a" style="left:70px;top:325px;width:181px;height:21px;background:#262626"></div>
<div class="a" style="left:71px;top:325px;width:64px;height:21px;background:#303030"></div>
<svg style="left:74px;top:331px" width="6" height="10" fill="none" stroke="#999" stroke-width="1"><path d="M1 3.5 L3 1.5 L5 3.5 M1 6.5 L3 8.5 L5 6.5"/></svg>
<div class="t" style="left:82px;top:332px;font-size:8.5px;font-weight:bold;color:#e4e4e4;letter-spacing:-0.4px">Magic Wand</div>
<svg style="left:237px;top:332px" width="9" height="7" fill="#888"><rect y="0" width="9" height="1.2"/><rect y="2.5" width="9" height="1.2"/><rect y="5" width="9" height="1.2"/></svg>
<svg style="left:227px;top:317px" width="6" height="5" fill="#bbb"><path d="M2.5 0 L0 2.5 L2.5 5Z M5.5 0 L3 2.5 L5.5 5Z"/></svg>
<svg style="left:241px;top:317px" width="6" height="6"><path d="M0.5 0.5 L5.5 5.5 M5.5 0.5 L0.5 5.5" stroke="#c8c8c8" stroke-width="1.3"/></svg>
<div class="a" style="left:232px;top:352px;width:15px;height:15px;border:1px solid #2c2c2c;border-radius:2px"></div>
<div class="a" style="left:240px;top:372px;width:8px;height:1px;background:#2c2c2c"></div>
<div class="a" style="left:232px;top:378px;width:15px;height:15px;border:1px solid #2c2c2c;border-radius:2px"></div>
<div class="a" style="left:232px;top:397px;width:15px;height:16px;background:#303030;border-radius:2px"></div>
<div class="a" style="left:240px;top:418px;width:8px;height:1px;background:#2c2c2c"></div>
<div class="a" style="left:232px;top:423px;width:15px;height:17px;background:#303030;border-radius:2px"></div>

<!-- Swatches floating -->
<div class="a" style="left:51px;top:351px;width:189px;height:126px;background:#323232;border:1px solid #262626;border-radius:3px 3px 0 0"></div>
<div class="a" style="left:51px;top:351px;width:189px;height:11px;background:#282828;border-radius:3px 3px 0 0"></div>
<div class="a" style="left:51px;top:362px;width:189px;height:21px;background:#262626"></div>
<div class="a" style="left:52px;top:362px;width:47px;height:21px;background:#303030"></div>
<div class="t" style="left:58px;top:369px;font-size:8.5px;font-weight:bold;color:#e4e4e4;letter-spacing:-0.4px">Swatches</div>
<svg style="left:226px;top:369px" width="9" height="7" fill="#888"><rect y="0" width="9" height="1.2"/><rect y="2.5" width="9" height="1.2"/><rect y="5" width="9" height="1.2"/></svg>
<svg style="left:215px;top:354px" width="6" height="5" fill="#bbb"><path d="M2.5 0 L0 2.5 L2.5 5Z M5.5 0 L3 2.5 L5.5 5Z"/></svg>
<svg style="left:229px;top:354px" width="6" height="6"><path d="M0.5 0.5 L5.5 5.5 M5.5 0.5 L0.5 5.5" stroke="#c8c8c8" stroke-width="1.3"/></svg>
<div class="a" style="left:64px;top:396px;width:14px;height:14px;background:#000;border:1px solid #ddd"></div>
<div class="a" style="left:67px;top:399px;width:8px;height:8px;background:#2e3434;border:1px solid #ddd"></div>
<div class="a" style="left:56px;top:388px;width:14px;height:14px;background:#9cc7ec;border:1px solid #e8e8e8"></div>
<div class="a" style="left:197px;top:388px;width:38px;height:18px;border:1px solid #2c2c2c;border-radius:2px"></div>
<div class="a" style="left:216px;top:388px;width:19px;height:18px;background:#1f1f1f"></div>
<svg style="left:201px;top:391px" width="30" height="12" fill="#c8c8c8"><rect x="0" y="0.5" width="10" height="1.3"/><rect x="0" y="3.5" width="10" height="1.3"/><rect x="0" y="6.5" width="10" height="1.3"/><rect x="0" y="9.5" width="10" height="1.3"/>
<rect x="20" y="1" width="2.5" height="2.5"/><rect x="23.5" y="1" width="2.5" height="2.5"/><rect x="27" y="1" width="2.5" height="2.5"/><rect x="20" y="4.5" width="2.5" height="2.5"/><rect x="23.5" y="4.5" width="2.5" height="2.5"/><rect x="27" y="4.5" width="2.5" height="2.5"/><rect x="20" y="8" width="2.5" height="2.5"/><rect x="23.5" y="8" width="2.5" height="2.5"/><rect x="27" y="8" width="2.5" height="2.5"/></svg>
<div class="a" style="left:55px;top:415px;width:181px;height:41px;border:1px solid #2d2d2d"></div>
<div class="a" style="left:224px;top:416px;width:11px;height:40px;background:#2a2a2a"></div>
<svg style="left:225px;top:418px" width="9" height="36" fill="none" stroke="#666" stroke-width="1"><path d="M1.5 5 L4.5 2 L7.5 5 M1.5 31 L4.5 34 L7.5 31"/></svg>
<svg id="sw" style="left:56px;top:416px;overflow:hidden" width="165" height="40"><defs><linearGradient id="g1"><stop offset="0" stop-color="#fff"/><stop offset="1" stop-color="#222"/></linearGradient><linearGradient id="g2"><stop offset="0" stop-color="#ffe020"/><stop offset="1" stop-color="#e05a20"/></linearGradient><linearGradient id="g3"><stop offset="0" stop-color="#3a78d0"/><stop offset="1" stop-color="#e0ecf8"/></linearGradient></defs><rect x="0.0" y="0" width="10" height="10" fill="#fff"/><path d="M0.5 9.5 L9.5 0.5" stroke="#e03a1e" stroke-width="1.3"/><rect x="10.93" y="0" width="10" height="10" fill="#eaf0f0"/><rect x="21.86" y="0" width="10" height="10" fill="#ffffff"/><rect x="32.79" y="0" width="10" height="10" fill="#000000"/><rect x="43.72" y="0" width="10" height="10" fill="#d6402a"/><rect x="54.65" y="0" width="10" height="10" fill="#ffec1f"/><rect x="65.58" y="0" width="10" height="10" fill="#23a257"/><rect x="76.51" y="0" width="10" height="10" fill="#00a7e8"/><rect x="87.44" y="0" width="10" height="10" fill="#2e3192"/><rect x="98.37" y="0" width="10" height="10" fill="#d3398f"/><rect x="109.3" y="0" width="10" height="10" fill="#a33434"/><rect x="120.23" y="0" width="10" height="10" fill="#d5553f"/><rect x="131.16" y="0" width="10" height="10" fill="#e07132"/><rect x="142.09" y="0" width="10" height="10" fill="#e69d34"/><rect x="153.02" y="0" width="10" height="10" fill="#ecb24c"/><rect x="0.0" y="11" width="10" height="10" fill="#f3e74a"/><rect x="10.93" y="11" width="10" height="10" fill="#d8e146"/><rect x="21.86" y="11" width="10" height="10" fill="#9ccb50"/><rect x="32.79" y="11" width="10" height="10" fill="#5db256"/><rect x="43.72" y="11" width="10" height="10" fill="#41924e"/><rect x="54.65" y="11" width="10" height="10" fill="#2b6a3c"/><rect x="65.58" y="11" width="10" height="10" fill="#5bb37d"/><rect x="76.51" y="11" width="10" height="10" fill="#4ea39f"/><rect x="87.44" y="11" width="10" height="10" fill="#5ca7e0"/><rect x="98.37" y="11" width="10" height="10" fill="#3d76bc"/><rect x="109.3" y="11" width="10" height="10" fill="#2a3f95"/><rect x="120.23" y="11" width="10" height="10" fill="#27286a"/><rect x="131.16" y="11" width="10" height="10" fill="#5c3b96"/><rect x="142.09" y="11" width="10" height="10" fill="#7e3c97"/><rect x="153.02" y="11" width="10" height="10" fill="#8d3572"/><rect x="0.0" y="22" width="10" height="10" fill="#c43a6e"/><rect x="10.93" y="22" width="10" height="10" fill="#d64d8e"/><rect x="21.86" y="22" width="10" height="10" fill="#c8bca0"/><rect x="32.79" y="22" width="10" height="10" fill="#9c8e80"/><rect x="43.72" y="22" width="10" height="10" fill="#726b5e"/><rect x="54.65" y="22" width="10" height="10" fill="#555048"/><rect x="65.58" y="22" width="10" height="10" fill="#c1a277"/><rect x="76.51" y="22" width="10" height="10" fill="#a3865a"/><rect x="87.44" y="22" width="10" height="10" fill="#876845"/><rect x="98.37" y="22" width="10" height="10" fill="#745a3a"/><rect x="109.3" y="22" width="10" height="10" fill="#5e4424"/><rect x="120.23" y="22" width="10" height="10" fill="#3c2c1c"/><rect x="131.16" y="22" width="10" height="10" fill="url(#g1)"/><rect x="142.09" y="22" width="10" height="10" fill="url(#g2)"/><rect x="153.02" y="22" width="10" height="10" fill="url(#g3)"/><rect x="0.0" y="33" width="10" height="6" fill="#111"/><circle cx="5.0" cy="39" r="3.5" fill="#ddd"/><rect x="10.93" y="33" width="10" height="6" fill="#7ab040"/><rect x="13.93" y="35" width="4" height="3" fill="#e0e080"/><rect x="21.86" y="33" width="10" height="6" fill="#8a7050"/><rect x="23.86" y="34" width="5" height="3" fill="#c8b898"/></svg>
<div class="a" style="left:51px;top:470px;width:189px;height:7px;background:#2c2c2c;border-top:1px solid #262626"></div>
<div class="a" style="left:138px;top:472px;width:14px;height:2px;background:repeating-linear-gradient(to right,#1e1e1e 0 1.5px,transparent 1.5px 2.5px)"></div>
<svg style="left:58px;top:458px" width="165" height="12" fill="none" stroke="#b0b0b0" stroke-width="1.2">
<path d="M2 10 V2 M5 10 V3 M7 10 V2 L10 10" /><path d="M11 11 h2" stroke-width="0.8"/>
<circle cx="27" cy="6" r="2.5"/><path d="M29 4 l2 -2 M29 8 l2 2" />
<path d="M43 10 h10 a3 3 0 0 0 0 -6 a4 4 0 0 0 -7 1 a2.5 2.5 0 0 0 -3 5Z" fill="#555" stroke="#555"/>
<rect x="66" y="1" width="9" height="9" fill="#b0b0b0"/><path d="M68 3 h1 M71 3 h1 M68 6 h1 M71 6 h1" stroke="#333"/>
<rect x="88" y="2" width="9" height="8" stroke="#555"/>
<path d="M109 3 h4 l1 1 h6 v6 h-11Z" fill="#b0b0b0"/>
<path d="M131 2 h8 v8 h-6 l-2 -2Z" fill="#b0b0b0"/>
<path d="M150 3 h8 M152 3 v7 h5 v-7 M153 1.5 h2" stroke="#555"/>
</svg>

<!-- CANVAS -->
<div class="a" style="left:278px;top:50px;width:930px;height:23px;background:#262626"></div>
<div class="a" style="left:279px;top:73px;width:915px;height:818px;background:#383838"></div>
<!-- v scrollbar -->
<div class="a" style="left:1194px;top:73px;width:12px;height:817px;background:#2c2c2c"></div>
<div class="a" style="left:1206px;top:50px;width:2px;height:857px;background:#282828"></div>

<!-- RIGHT ICON COLUMN -->
<div class="a" style="left:1209px;top:60px;width:28px;height:847px;background:#323232"></div>
<div class="a" style="left:1237px;top:50px;width:3px;height:857px;background:#282828"></div>
<!-- RIGHT PANEL -->
<div id="rightcol" class="a" style="left:1240px;top:60px;width:260px;height:847px;background:#333333"></div>

<!-- RIGHT CONTENT -->
<div id="right" style="font-size:7.7px;color:#c0c0c0">
<svg style="left:1208px;top:50px" width="292" height="10"><path d="M20 5 L23 2.5 L23 7.5Z M24 5 L27 2.5 L27 7.5Z" fill="#aaa"/><path d="M279 2.5 L282 5 L279 7.5Z M283 2.5 L286 5 L283 7.5Z" fill="#aaa"/></svg>
<!-- right icon column boxes -->
<div class="a" style="left:1209px;top:91px;width:28px;height:2px;background:#282828"></div>
<div class="a" style="left:1209px;top:123px;width:28px;height:2px;background:#282828"></div>
<div class="a" style="left:1209px;top:125px;width:28px;height:782px;background:#303030"></div>
<div class="a" style="left:1216px;top:63px;width:14px;height:2px;background:repeating-linear-gradient(to right,#1e1e1e 0 1.5px,transparent 1.5px 2.5px)"></div>
<div class="a" style="left:1216px;top:96px;width:14px;height:2px;background:repeating-linear-gradient(to right,#1e1e1e 0 1.5px,transparent 1.5px 2.5px)"></div>
<svg style="left:1214px;top:70px" width="18" height="18"><circle cx="7" cy="7" r="5.5" fill="#c8c8c8"/><circle cx="11" cy="11" r="5.5" fill="#6a6a6a" stroke="#c8c8c8" stroke-width="1.3"/></svg>
<div class="t" style="left:1217px;top:103px;font-size:14px;color:#d0d0d0">A</div>
<div class="a" style="left:1229px;top:102px;width:1px;height:14px;background:#d0d0d0"></div>
<!-- Links panel tabs -->
<div class="a" style="left:1240px;top:60px;width:260px;height:21px;background:#262626"></div>
<div class="a" style="left:1277px;top:60px;width:32px;height:21px;background:#333333"></div>
<div class="t" style="left:1247px;top:67px;font-size:7.8px;color:#a8a8a8">Layers</div>
<div class="t" style="left:1284px;top:67px;font-size:7.8px;font-weight:bold;color:#e8e8e8">Links</div>
<svg style="left:1487px;top:67px" width="9" height="7" fill="#888"><rect y="0" width="9" height="1.2"/><rect y="2.5" width="9" height="1.2"/><rect y="5" width="9" height="1.2"/></svg>
<div class="a" style="left:1244px;top:86px;width:251px;height:356px;border:1px solid #3a3a3a;border-radius:2px"></div>
<svg style="left:1249px;top:447px" width="10" height="7"><path d="M0 0 H9 L4.5 5Z" fill="#e0e0e0"/></svg>
<svg style="left:1380px;top:444px" width="96" height="12" fill="none" stroke="#555" stroke-width="1.2">
<path d="M2 10 a2.5 2.5 0 0 1 0 -5 a3.5 3.5 0 0 1 7 -1 a3 3 0 0 1 5 3 v3Z" fill="#555"/><circle cx="4" cy="9" r="2"/>
<rect x="23" y="4" width="6" height="4" rx="2"/><rect x="28" y="4" width="6" height="4" rx="2"/>
<path d="M42 7 h6 M46 5 l2 2 l-2 2 M48 3 h3 l3 3 v5 h-6 v-2"/>
<path d="M66 5 a4 4 0 0 1 7 0 M73 8 a4 4 0 0 1 -7 0 M73 2.5 v3 h-3 M66 10.5 v-3 h3"/>
<path d="M86 11 L93 3" stroke-width="2.2"/>
</svg>
<div class="a" style="left:1244px;top:457px;width:251px;height:160px;border:1px solid #3a3a3a;border-radius:2px"></div>
<div style="color:#b8b8b8;font-size:7.6px">
<div class="t" style="left:1200px;width:91px;text-align:right;top:463px">Name:</div>
<div class="t" style="left:1200px;width:91px;text-align:right;top:477px">Format:</div>
<div class="t" style="left:1200px;width:91px;text-align:right;top:491px">Color Space:</div>
<div class="t" style="left:1200px;width:91px;text-align:right;top:506px">Location:</div>
<div class="t" style="left:1200px;width:91px;text-align:right;top:520px">PPI:</div>
<div class="t" style="left:1200px;width:91px;text-align:right;top:534px">Dimensions:</div>
<div class="t" style="left:1200px;width:91px;text-align:right;top:548px">Scale:</div>
<div class="t" style="left:1200px;width:91px;text-align:right;top:562px">Size:</div>
<div class="t" style="left:1200px;width:91px;text-align:right;top:576px">Created:</div>
<div class="t" style="left:1200px;width:91px;text-align:right;top:590px">Modified:</div>
<div class="t" style="left:1200px;width:91px;text-align:right;top:604px">Transparent:</div>
</div>
<svg style="left:1298px;top:467px" width="6" height="146" fill="#aaa" transform="scale(0.75,1)"><rect x="0" y="0" width="4" height="1"/><rect x="0" y="14" width="4" height="1"/><rect x="0" y="28" width="4" height="1"/><rect x="0" y="43" width="4" height="1" fill="#555"/><rect x="0" y="57" width="4" height="1"/><rect x="0" y="71" width="4" height="1"/><rect x="0" y="85" width="4" height="1"/><rect x="0" y="99" width="4" height="1"/><rect x="0" y="113" width="4" height="1"/><rect x="0" y="127" width="4" height="1"/><rect x="0" y="141" width="4" height="1"/></svg>
<svg style="left:1356px;top:620px" width="30" height="11" fill="#555"><path d="M5 0 L0 5 L5 10Z M22 0 L27 5 L22 10Z"/></svg>
<!-- separator -->
<div class="a" style="left:1240px;top:633px;width:260px;height:2px;background:#282828"></div>
<!-- Stroke panel -->
<div class="a" style="left:1240px;top:635px;width:260px;height:21px;background:#262626"></div>
<div class="a" style="left:1240px;top:635px;width:43px;height:21px;background:#333333"></div>
<div class="a" style="left:1283px;top:635px;width:57px;height:21px;background:#2a2a2a"></div>
<svg style="left:1243px;top:641px" width="6" height="10" fill="none" stroke="#999" stroke-width="1"><path d="M1 3.5 L3 1.5 L5 3.5 M1 6.5 L3 8.5 L5 6.5"/></svg>
<div class="t" style="left:1251px;top:641px;font-size:8px;font-weight:bold;color:#e8e8e8;letter-spacing:-0.2px">Stroke</div>
<div class="t" style="left:1290px;top:641px;font-size:8px;color:#a8a8a8">Appearance</div>
<svg style="left:1487px;top:642px" width="9" height="7" fill="#888"><rect y="0" width="9" height="1.2"/><rect y="2.5" width="9" height="1.2"/><rect y="5" width="9" height="1.2"/></svg>
<div style="color:#b8b8b8">
<div class="t" style="left:1200px;width:88px;text-align:right;top:665px">Weight:</div>
<div class="t" style="left:1200px;width:88px;text-align:right;top:686px">Cap:</div>
<div class="t" style="left:1200px;width:88px;text-align:right;top:707px">Corner:</div>
<div class="t" style="left:1200px;width:88px;text-align:right;top:728px">Align Stroke:</div>
<div class="t" style="left:1200px;width:88px;text-align:right;top:812px">Arrowheads:</div>
<div class="t" style="left:1200px;width:88px;text-align:right;top:835px;color:#5a5a5a">Scale:</div>
<div class="t" style="left:1200px;width:88px;text-align:right;top:858px;color:#5a5a5a">Align:</div>
<div class="t" style="left:1200px;width:88px;text-align:right;top:885px">Profile:</div>
</div>
<div class="a" style="left:1291px;top:662px;width:68px;height:15px;border:1px solid #2c2c2c;border-radius:2px"></div>
<div class="a" style="left:1291px;top:662px;width:13px;height:15px;background:#2a2a2a"></div>
<svg style="left:1293px;top:663px" width="9" height="13"><path d="M1 5 L4.5 2 L8 5 M1 8 L4.5 11 L8 8" stroke="#bbb" stroke-width="1.1" fill="none"/></svg>
<div class="a" style="left:1305px;top:662px;width:39px;height:15px;background:#262626"></div>
<div class="t" style="left:1307px;top:665px;color:#d0d0d0">0.353 mm</div>
<div class="a" style="left:1346px;top:662px;width:12px;height:15px;background:#2a2a2a"></div>
<svg style="left:1348px;top:667px" width="8" height="5"><path d="M1 1 L4 4 L7 1" stroke="#bbb" stroke-width="1.2" fill="none"/></svg>
<!-- button triples -->
<div class="a" style="left:1291px;top:682px;width:53px;height:15px;border:1px solid #2c2c2c;border-radius:2px"></div>
<div class="a" style="left:1291px;top:682px;width:17px;height:15px;background:#242424"></div>
<div class="a" style="left:1291px;top:703px;width:53px;height:16px;border:1px solid #2c2c2c;border-radius:2px"></div>
<div class="a" style="left:1291px;top:703px;width:17px;height:16px;background:#242424"></div>
<div class="a" style="left:1291px;top:724px;width:53px;height:16px;border:1px solid #2c2c2c;border-radius:2px"></div>
<div class="a" style="left:1291px;top:724px;width:17px;height:16px;background:#242424"></div>
<svg style="left:1291px;top:682px" width="54" height="60" fill="#c8c8c8">
<path d="M7 3 H13 V13 H7 V9.5 H5 V6.5 H7Z"/><path d="M6 8 H13" stroke="#333" stroke-width="1"/><circle cx="6.5" cy="8" r="0.9" fill="#111"/>
<path d="M25 3 H31 V13 H25 A5 5 0 0 1 25 3Z"/><path d="M24.5 8 H31" stroke="#444" stroke-width="1"/><circle cx="24.5" cy="8" r="0.9" fill="#111"/>
<rect x="40" y="3" width="9" height="10"/><path d="M44 8 H49" stroke="#444" stroke-width="1"/><circle cx="44" cy="8" r="0.9" fill="#111"/>
<path d="M3 24 H13 V29 H8 V34 H3 Z"/><rect x="10" y="31" width="3" height="3"/><path d="M6.5 34 V27.5 H13" stroke="#555" stroke-width="0.8" fill="none"/>
<path d="M21 34 V29 A5 5 0 0 1 26 24 H31 V29 H26 V34Z"/><rect x="28" y="31" width="3" height="3"/><path d="M24.5 34 V28 H31" stroke="#555" stroke-width="0.8" fill="none"/>
<path d="M39 34 V28 L43 24 H49 V29 H44 V34Z"/><rect x="46" y="31" width="3" height="3"/><path d="M42.5 34 V28 H49" stroke="#555" stroke-width="0.8" fill="none"/>
<path d="M3 44 H7 V51 H13 V55 H3Z"/><path d="M5 44 V53 H13" stroke="#333" stroke-width="0.9" fill="none"/>
<path d="M22 44 H26 V50 H31 V54 H22Z"/><path d="M23 44 V53 H31" stroke="#333" stroke-width="0.9" fill="none"/><path d="M21 52 V56 H26" stroke="#c8c8c8" stroke-width="0.8" fill="none"/>
<path d="M39 44 H44 V50 H49 V55 H39Z"/><path d="M43 44 V51 H49" stroke="#444" stroke-width="0.9" fill="none"/>
</svg>
<div class="t" style="left:1357px;top:707px;color:#b8b8b8">Limit:</div>
<div class="a" style="left:1380px;top:703px;width:28px;height:15px;background:#262626;border-radius:2px"></div>
<div class="t" style="left:1383px;top:706px;color:#d0d0d0">10</div>
<div class="t" style="left:1412px;top:708px;color:#b8b8b8">x</div>
<div class="a" style="left:1244px;top:745px;width:172px;height:1px;background:#2a2a2a"></div>
<div class="a" style="left:1244px;top:753px;width:10px;height:10px;border:1px solid #8a8a8a;border-radius:1px"></div>
<div class="t" style="left:1258px;top:754px;color:#d0d0d0">Dashed Line</div>
<div class="a" style="left:1357px;top:751px;width:59px;height:16px;border:1px solid #2e2e2e;border-radius:2px"></div>
<div class="a" style="left:1386px;top:751px;width:1px;height:16px;background:#2e2e2e"></div>
<svg style="left:1361px;top:754px" width="52" height="10" fill="none" stroke="#5a5a5a" stroke-width="1"><path d="M0.5 3 v-2 h5 M8 1 h5 M15 1 h5 v2 M0.5 7 v2 h5 M8 9 h5 M15 9 h5 v-2"/><path d="M30.5 3 v-2 h4 M37 1 h5 v2 M30.5 7 v2 h4 M37 9 h5 v-2"/></svg>
<div class="a" style="left:1244px;top:770px;width:172px;height:18px;background:repeating-linear-gradient(to right,#383838 0,#383838 27px,transparent 27px,transparent 29px)"></div>
<div style="color:#555;font-size:7.5px">
<div class="t" style="left:1249px;top:790px">dash</div><div class="t" style="left:1280px;top:790px">gap</div>
<div class="t" style="left:1307px;top:790px">dash</div><div class="t" style="left:1338px;top:790px">gap</div>
<div class="t" style="left:1364px;top:790px">dash</div><div class="t" style="left:1395px;top:790px">gap</div>
</div>
<div class="a" style="left:1244px;top:802px;width:172px;height:1px;background:#2a2a2a"></div>
<div class="a" style="left:1291px;top:808px;width:30px;height:15px;background:#e6e6e6"></div>
<div class="a" style="left:1294px;top:815px;width:24px;height:2px;background:#000"></div>
<div class="a" style="left:1321px;top:808px;width:13px;height:15px;background:#282828"></div>
<svg style="left:1324px;top:813px" width="8" height="5"><path d="M1 1 L4 4 L7 1" stroke="#bbb" stroke-width="1.2" fill="none"/></svg>
<div class="a" style="left:1341px;top:808px;width:30px;height:15px;background:#e6e6e6"></div>
<div class="a" style="left:1344px;top:815px;width:24px;height:2px;background:#000"></div>
<div class="a" style="left:1371px;top:808px;width:13px;height:15px;background:#282828"></div>
<svg style="left:1374px;top:813px" width="8" height="5"><path d="M1 1 L4 4 L7 1" stroke="#bbb" stroke-width="1.2" fill="none"/></svg>
<svg style="left:1400px;top:810px" width="12" height="11" fill="none" stroke="#666" stroke-width="1"><path d="M1 3 h9 l-2 -2 M11 8 h-9 l2 2"/></svg>
<div class="a" style="left:1291px;top:830px;width:44px;height:17px;background:#303030;border-radius:2px"></div>
<div class="a" style="left:1341px;top:830px;width:44px;height:17px;background:#303030;border-radius:2px"></div>
<svg style="left:1294px;top:832px" width="90" height="13" fill="none" stroke="#4a4a4a" stroke-width="1"><path d="M1 5 L4.5 2 L8 5 M1 8 L4.5 11 L8 8 M51 5 L54.5 2 L58 5 M51 8 L54.5 11 L58 8"/></svg>
<div class="t" style="left:1308px;top:835px;color:#505050">100%</div>
<div class="t" style="left:1358px;top:835px;color:#505050">100%</div>
<svg style="left:1400px;top:832px" width="12" height="14" fill="none" stroke="#555" stroke-width="1.2"><path d="M4 2 h4 v4 M4 12 h4 v-4 M1 1 L11 13"/></svg>
<div class="a" style="left:1291px;top:854px;width:34px;height:16px;border:1px solid #2e2e2e;border-radius:2px"></div>
<div class="a" style="left:1308px;top:854px;width:1px;height:16px;background:#2e2e2e"></div>
<svg style="left:1294px;top:857px" width="30" height="10" fill="none" stroke="#555" stroke-width="1"><path d="M0 5 h8 l-2 -2 M0 5 h8 l-2 2 M9 1 v8 M16 5 h8 l-2 -2 M16 5 h8 l-2 2 M18 1 h6"/></svg>
<div class="a" style="left:1244px;top:876px;width:172px;height:1px;background:#2a2a2a"></div>
<div class="a" style="left:1291px;top:882px;width:68px;height:15px;background:#e6e6e6"></div>
<div class="a" style="left:1295px;top:888px;width:30px;height:2px;background:#000"></div>
<div class="t" style="left:1327px;top:885px;color:#111;font-size:8px">Uniform</div>
<div class="a" style="left:1359px;top:882px;width:15px;height:15px;background:#282828"></div>
<svg style="left:1362px;top:887px" width="8" height="5"><path d="M1 1 L4 4 L7 1" stroke="#bbb" stroke-width="1.2" fill="none"/></svg>
<svg style="left:1382px;top:884px" width="30" height="12" fill="none" stroke="#5a5a5a" stroke-width="1"><path d="M5.5 0 v12 M1 2 v8 l3 -4Z M10 2 v8 l-3 -4Z M19 1 h10 M19 11 h10 M20 1 l4 4 l4 -4 M20 11 l4 -4 l4 4"/></svg>
</div>

<!-- ARTBOARD -->
<div class="a" style="left:504px;top:138px;width:466px;height:689px;border:1px solid #a0402a"></div>
<div class="a" style="left:514px;top:149px;width:445px;height:666px;border:1px solid #1c1c1c;background:#fff"></div>
<div class="a" style="left:515px;top:150px;width:1px;height:664px;background:#444"></div>
<div class="a" style="left:592px;top:327px;width:292px;height:142px;border:1px solid #1a1a1a;background:linear-gradient(to right,#ffffff 0%,#dcecfa 15%,#b8dcf6 35%,#94cdf2 55%,#5cb8ee 75%,#28a8ea 88%,#00a0e6 100%)"></div>
<div class="a" style="left:625px;top:543px;width:116px;height:88px;border:1px solid #1f2a55;background:#9cc5e9"></div>

<!-- selection handles -->
<div class="a" style="left:626px;top:544px;width:114px;height:1px;background:#4a6cf0"></div>
<div class="a" style="left:626px;top:629px;width:114px;height:1px;background:#4a6cf0"></div>
<div class="a" style="left:626px;top:544px;width:1px;height:86px;background:#7aa0f5"></div>
<div class="a" style="left:739px;top:544px;width:1px;height:86px;background:#7aa0f5"></div>
<div class="a" style="left:623px;top:541px;width:5px;height:5px;background:#5a78ff"></div>
<div class="a" style="left:738px;top:541px;width:5px;height:5px;background:#5a78ff"></div>
<div class="a" style="left:623px;top:627px;width:5px;height:5px;background:#5a78ff"></div>
<div class="a" style="left:738px;top:627px;width:5px;height:5px;background:#5a78ff"></div>
<div class="a" style="left:681px;top:585px;width:4px;height:4px;background:#5a78ff"></div>

<!-- TABS -->
<div id="tabs" style="font-size:8.5px;color:#a8a8a8">
<div class="a" style="left:278px;top:51px;width:19px;height:21px;background:#2a2a2a"></div>
<div class="a" style="left:297px;top:51px;width:1px;height:21px;background:#222"></div>
<div class="a" style="left:298px;top:51px;width:134px;height:21px;background:#2a2a2a"></div>
<div class="a" style="left:432px;top:51px;width:1px;height:21px;background:#222"></div>
<div class="a" style="left:433px;top:51px;width:190px;height:21px;background:#2a2a2a"></div>
<div class="a" style="left:623px;top:51px;width:1px;height:21px;background:#222"></div>
<div class="a" style="left:624px;top:51px;width:210px;height:21px;background:#2a2a2a"></div>
<div class="a" style="left:834px;top:51px;width:1px;height:21px;background:#222"></div>
<div class="a" style="left:835px;top:51px;width:141px;height:21px;background:#2a2a2a"></div>
<div class="a" style="left:976px;top:51px;width:199px;height:22px;background:#383838"></div>
<div class="t" style="left:305px;top:58px">203366.ai* @ 570.98% (C...</div>
<div class="t" style="left:443px;top:58px">Suhary_chesse_70g_05_02_2019print.ai*</div>
<div class="t" style="left:631px;top:58px">Grenki_chesnok_70g_C_05_02_2019_PRINT.ai*</div>
<div class="t" style="left:843px;top:58px">Untitled-3* @</div>
<div class="t" style="left:927px;top:58px">'CMY...</div>
<div class="t" style="left:983px;top:58px;color:#e6e6e6;font-weight:bold;letter-spacing:0.1px">Untitled-4* @ 100% (CMYK/GPU Preview)</div>
<svg style="left:283px;top:58px" width="7" height="7"><path d="M1 1 L6 6 M6 1 L1 6" stroke="#b8b8b8" stroke-width="1.4"/></svg>
<svg style="left:421px;top:58px" width="7" height="7"><path d="M1 1 L6 6 M6 1 L1 6" stroke="#b8b8b8" stroke-width="1.4"/></svg>
<svg style="left:610px;top:58px" width="7" height="7"><path d="M1 1 L6 6 M6 1 L1 6" stroke="#b8b8b8" stroke-width="1.4"/></svg>
<svg style="left:822px;top:58px" width="7" height="7"><path d="M1 1 L6 6 M6 1 L1 6" stroke="#b8b8b8" stroke-width="1.4"/></svg>
<svg style="left:961px;top:58px" width="7" height="7"><path d="M1 1 L6 6 M6 1 L1 6" stroke="#b8b8b8" stroke-width="1.4"/></svg>
<svg style="left:1160px;top:58px" width="7" height="7"><path d="M1 1 L6 6 M6 1 L1 6" stroke="#f0f0f0" stroke-width="1.6"/></svg>
<svg style="left:1193px;top:58px" width="12" height="8"><path d="M1 1 L4 4 L1 7 M6 1 L9 4 L6 7" stroke="#c8c8c8" stroke-width="1.2" fill="none"/></svg>
</div>
<!-- v scrollbar details -->
<svg style="left:1196px;top:77px" width="8" height="5"><path d="M1 4 L4 1 L7 4" stroke="#555" stroke-width="1.2" fill="none"/></svg>
<div class="a" style="left:1195px;top:472px;width:10px;height:20px;background:#444;border-radius:5px"></div>
<svg style="left:1196px;top:882px" width="8" height="5"><path d="M1 1 L4 4 L7 1" stroke="#777" stroke-width="1.2" fill="none"/></svg>

<!-- floating gradient panel -->
<div class="a" style="left:899px;top:59px;width:31px;height:44px;background:#323232;border:1px solid #262626"></div>
<div class="a" style="left:899px;top:59px;width:31px;height:11px;background:#282828"></div>
<svg style="left:905px;top:62px" width="6" height="5" fill="#bbb"><path d="M0 0 L2.5 2.5 L0 5Z M3 0 L5.5 2.5 L3 5Z"/></svg>
<svg style="left:920px;top:63px" width="6" height="6"><path d="M0.5 0.5 L5.5 5.5 M5.5 0.5 L0.5 5.5" stroke="#c8c8c8" stroke-width="1.3"/></svg>
<div class="a" style="left:907px;top:73px;width:16px;height:2px;background:repeating-linear-gradient(to right,#1e1e1e 0 1.5px,transparent 1.5px 2.5px)"></div>
<div class="a" style="left:908px;top:83px;width:14px;height:11px;border:1px solid #ccc;background:linear-gradient(to right,#aaa,#222)"></div>

<!-- Info panel -->
<div class="a" style="left:314px;top:96px;width:57px;height:43px;background:#303030;border:1px solid #262626;border-radius:3px 3px 0 0"></div>
<div class="a" style="left:314px;top:96px;width:57px;height:11px;background:#282828;border-radius:3px 3px 0 0"></div>
<svg style="left:346px;top:99px" width="6" height="5" fill="#bbb"><path d="M0 0 L2.5 2.5 L0 5Z M3 0 L5.5 2.5 L3 5Z"/></svg>
<svg style="left:361px;top:99px" width="6" height="6"><path d="M0.5 0.5 L5.5 5.5 M5.5 0.5 L0.5 5.5" stroke="#c8c8c8" stroke-width="1.3"/></svg>
<div class="a" style="left:324px;top:120px;width:12px;height:12px;border-radius:50%;background:#c8c8c8"></div>
<div class="a" style="left:329px;top:122px;width:2px;height:2px;background:#333"></div>
<div class="a" style="left:329px;top:125px;width:2px;height:5px;background:#333"></div>
<div class="a" style="left:334px;top:110px;width:16px;height:2px;background:repeating-linear-gradient(to right,#1e1e1e 0 1.5px,transparent 1.5px 2.5px)"></div>
<div class="t" style="left:343px;top:121px;font-size:9px;font-weight:bold;color:#e0e0e0">Info</div>

<!-- Messages panel -->
<div class="a" style="left:366px;top:528px;width:156px;height:43px;background:#303030;border:1px solid #262626;border-radius:3px 3px 0 0"></div>
<div class="a" style="left:366px;top:528px;width:156px;height:11px;background:#282828;border-radius:3px 3px 0 0"></div>
<svg style="left:497px;top:531px" width="6" height="5" fill="#bbb"><path d="M0 0 L2.5 2.5 L0 5Z M3 0 L5.5 2.5 L3 5Z"/></svg>
<svg style="left:512px;top:531px" width="6" height="6"><path d="M0.5 0.5 L5.5 5.5 M5.5 0.5 L0.5 5.5" stroke="#c8c8c8" stroke-width="1.3"/></svg>
<div class="a" style="left:436px;top:541px;width:16px;height:2px;background:repeating-linear-gradient(to right,#1e1e1e 0 1.5px,transparent 1.5px 2.5px)"></div>
<svg style="left:374px;top:549px" width="16" height="16" fill="none" stroke="#c8c8c8" stroke-width="1.2"><path d="M1 1 H15 V11 H6 L3 14 V11 H1 Z"/><path d="M4 4 H12 M4 6.5 H12 M4 9 H10" stroke-width="1"/></svg>
<div class="t" style="left:396px;top:553px;font-size:8px;font-weight:bold;letter-spacing:-0.4px;color:#d8d8d8">Messages</div>

<!-- STATUS BAR -->
<div class="a" style="left:279px;top:891px;width:915px;height:13px;background:#2a2a2a"></div>
<div class="a" style="left:282px;top:891px;width:40px;height:12px;background:#262626"></div>
<div class="t" style="left:285px;top:895px;font-size:8px;color:#c8c8c8">100%</div>
<div class="a" style="left:322px;top:891px;width:13px;height:12px;background:#262626;border-left:1px solid #333"></div>
<svg style="left:325px;top:895px" width="8" height="5"><path d="M1 1 L4 4 L7 1" stroke="#bbb" stroke-width="1.2" fill="none"/></svg>
<svg style="left:342px;top:893px" width="18" height="8" fill="#666"><rect x="0" y="0" width="1" height="7"/><path d="M6 0 L2 3.5 L6 7Z M11 0 L7 3.5 L11 7Z"/></svg>
<div class="a" style="left:368px;top:891px;width:35px;height:12px;background:#262626"></div>
<div class="t" style="left:370px;top:895px;font-size:8px;color:#c8c8c8">1</div>
<div class="a" style="left:403px;top:891px;width:13px;height:12px;background:#262626;border-left:1px solid #333"></div>
<svg style="left:404px;top:895px" width="8" height="5"><path d="M1 1 L4 4 L7 1" stroke="#bbb" stroke-width="1.2" fill="none"/></svg>
<svg style="left:422px;top:893px" width="18" height="8" fill="#666"><path d="M0 0 L4 3.5 L0 7Z M8 0 L12 3.5 L8 7Z"/><rect x="13" y="0" width="1" height="7"/></svg>
<div class="a" style="left:447px;top:891px;width:156px;height:12px;background:#2d2d2d"></div>
<div class="t" style="left:484px;top:895px;font-size:8px;color:#b0b0b0">Adobe Eyedropper Tool</div>
<svg style="left:606px;top:893px" width="6" height="8" fill="#ddd"><path d="M0 0 L5 4 L0 8Z"/></svg>
<svg style="left:621px;top:893px" width="5" height="8"><path d="M4 1 L1 4 L4 7" stroke="#888" stroke-width="1.1" fill="none"/></svg>
<div class="a" style="left:896px;top:892px;width:19px;height:10px;background:#444;border-radius:5px"></div>
<svg style="left:1185px;top:893px" width="5" height="8"><path d="M1 1 L4 4 L1 7" stroke="#888" stroke-width="1.1" fill="none"/></svg>

<!-- bottom status strip -->
<div class="a" style="left:0;top:904px;width:1500px;height:3px;background:#e8e6e0"></div>
</body></html>
